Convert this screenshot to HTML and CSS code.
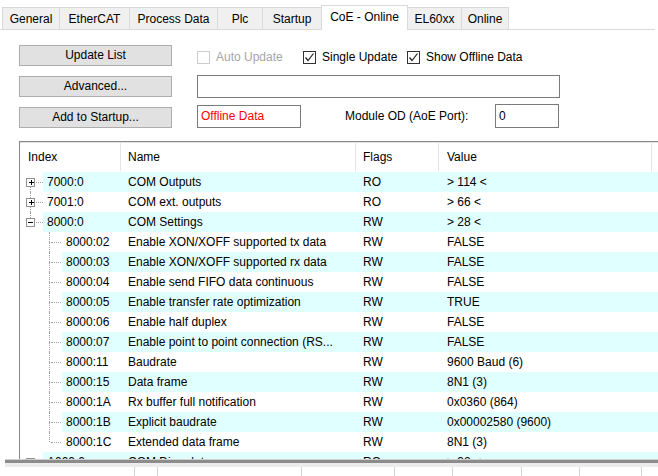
FILE: index.html
```html
<!DOCTYPE html>
<html>
<head>
<meta charset="utf-8">
<link rel="stylesheet" href="styles.css">
</head>
<body>
<div class="tabs">
  <div class="tab w-general">General</div>
  <div class="tab w-ethercat">EtherCAT</div>
  <div class="tab w-process">Process Data</div>
  <div class="tab w-plc">Plc</div>
  <div class="tab w-startup">Startup</div>
  <div class="tab sel w-coe">CoE - Online</div>
  <div class="tab w-el">EL60xx</div>
  <div class="tab w-online">Online</div>
</div>

<div class="controls">
  <div class="crow">
    <div class="btn">Update List</div>
    <div class="chk chk-auto disabled"><span class="box"></span>Auto Update</div>
    <div class="chk chk-single"><span class="box"><svg width="11" height="11" viewBox="0 0 11 11"><polyline points="1.5,5.5 4,8.5 9.5,1.5" fill="none" stroke="#222" stroke-width="1.2"/></svg></span>Single Update</div>
    <div class="chk"><span class="box"><svg width="11" height="11" viewBox="0 0 11 11"><polyline points="1.5,5.5 4,8.5 9.5,1.5" fill="none" stroke="#222" stroke-width="1.2"/></svg></span>Show Offline Data</div>
  </div>
  <div class="crow">
    <div class="btn">Advanced...</div>
    <div class="field field-wide"></div>
  </div>
  <div class="crow crow-end">
    <div class="btn">Add to Startup...</div>
    <div class="field field-offline">Offline Data</div>
    <div class="modlabel">Module OD (AoE Port):</div>
    <div class="field field-port">0</div>
  </div>
</div>

<div class="list">
  <div class="lhead">
    <div class="hc hc-index">Index</div>
    <div class="hc hc-name">Name</div>
    <div class="hc hc-flags">Flags</div>
    <div class="hc hc-value">Value</div>
    <div class="hc hc-rest"></div>
  </div>

  <div class="row">
    <div class="ttree"><div class="node"><span class="vseg off"></span><span class="exp"><span class="h"></span><span class="v"></span></span><span class="vseg"></span></div><span class="hl"></span></div>
    <div class="cells alt"><div class="c-index">7000:0</div><div class="c-name">COM Outputs</div><div class="c-flags">RO</div><div class="c-value">&gt; 114 &lt;</div></div>
  </div>
  <div class="row">
    <div class="ttree"><div class="node"><span class="vseg"></span><span class="exp"><span class="h"></span><span class="v"></span></span><span class="vseg"></span></div><span class="hl"></span></div>
    <div class="cells"><div class="c-index">7001:0</div><div class="c-name">COM ext. outputs</div><div class="c-flags">RO</div><div class="c-value">&gt; 66 &lt;</div></div>
  </div>
  <div class="row">
    <div class="ttree"><div class="node"><span class="vseg"></span><span class="exp"><span class="h"></span></span><span class="vseg off"></span></div><span class="hl"></span></div>
    <div class="cells alt"><div class="c-index">8000:0</div><div class="c-name">COM Settings</div><div class="c-flags">RW</div><div class="c-value">&gt; 28 &lt;</div></div>
  </div>

  <div class="row">
    <div class="ctree"><div class="cv"><span class="vseg"></span><span class="vseg"></span></div><span class="ch"></span></div>
    <div class="cells"><div class="c-index child">8000:02</div><div class="c-name">Enable XON/XOFF supported tx data</div><div class="c-flags">RW</div><div class="c-value">FALSE</div></div>
  </div>
  <div class="row">
    <div class="ctree"><div class="cv"><span class="vseg"></span><span class="vseg"></span></div><span class="ch"></span></div>
    <div class="cells alt"><div class="c-index child">8000:03</div><div class="c-name">Enable XON/XOFF supported rx data</div><div class="c-flags">RW</div><div class="c-value">FALSE</div></div>
  </div>
  <div class="row">
    <div class="ctree"><div class="cv"><span class="vseg"></span><span class="vseg"></span></div><span class="ch"></span></div>
    <div class="cells"><div class="c-index child">8000:04</div><div class="c-name">Enable send FIFO data continuous</div><div class="c-flags">RW</div><div class="c-value">FALSE</div></div>
  </div>
  <div class="row">
    <div class="ctree"><div class="cv"><span class="vseg"></span><span class="vseg"></span></div><span class="ch"></span></div>
    <div class="cells alt"><div class="c-index child">8000:05</div><div class="c-name">Enable transfer rate optimization</div><div class="c-flags">RW</div><div class="c-value">TRUE</div></div>
  </div>
  <div class="row">
    <div class="ctree"><div class="cv"><span class="vseg"></span><span class="vseg"></span></div><span class="ch"></span></div>
    <div class="cells"><div class="c-index child">8000:06</div><div class="c-name">Enable half duplex</div><div class="c-flags">RW</div><div class="c-value">FALSE</div></div>
  </div>
  <div class="row">
    <div class="ctree"><div class="cv"><span class="vseg"></span><span class="vseg"></span></div><span class="ch"></span></div>
    <div class="cells alt"><div class="c-index child">8000:07</div><div class="c-name">Enable point to point connection (RS...</div><div class="c-flags">RW</div><div class="c-value">FALSE</div></div>
  </div>
  <div class="row">
    <div class="ctree"><div class="cv"><span class="vseg"></span><span class="vseg"></span></div><span class="ch"></span></div>
    <div class="cells"><div class="c-index child">8000:11</div><div class="c-name">Baudrate</div><div class="c-flags">RW</div><div class="c-value">9600 Baud (6)</div></div>
  </div>
  <div class="row">
    <div class="ctree"><div class="cv"><span class="vseg"></span><span class="vseg"></span></div><span class="ch"></span></div>
    <div class="cells alt"><div class="c-index child">8000:15</div><div class="c-name">Data frame</div><div class="c-flags">RW</div><div class="c-value">8N1 (3)</div></div>
  </div>
  <div class="row">
    <div class="ctree"><div class="cv"><span class="vseg"></span><span class="vseg"></span></div><span class="ch"></span></div>
    <div class="cells"><div class="c-index child">8000:1A</div><div class="c-name">Rx buffer full notification</div><div class="c-flags">RW</div><div class="c-value">0x0360 (864)</div></div>
  </div>
  <div class="row">
    <div class="ctree"><div class="cv"><span class="vseg"></span><span class="vseg"></span></div><span class="ch"></span></div>
    <div class="cells alt"><div class="c-index child">8000:1B</div><div class="c-name">Explicit baudrate</div><div class="c-flags">RW</div><div class="c-value">0x00002580 (9600)</div></div>
  </div>
  <div class="row">
    <div class="ctree"><div class="cv"><span class="vseg"></span><span class="vseg off"></span></div><span class="ch"></span></div>
    <div class="cells"><div class="c-index child">8000:1C</div><div class="c-name">Extended data frame</div><div class="c-flags">RW</div><div class="c-value">8N1 (3)</div></div>
  </div>
  <div class="row">
    <div class="ttree"><div class="node"><span class="vseg off"></span><span class="exp"><span class="h"></span><span class="v"></span></span><span class="vseg off"></span></div><span class="hl"></span></div>
    <div class="cells alt"><div class="c-index">A000:0</div><div class="c-name">COM Diag data</div><div class="c-flags">RO</div><div class="c-value">&gt; 32 &lt;</div></div>
  </div>
</div>

<div class="splitter"></div>
<div class="bhead">
  <div class="bc b1"></div><div class="bc b2"></div><div class="bc b3"></div><div class="bc b4"></div>
  <div class="bc b5"></div><div class="bc b6"></div><div class="bc b7"></div><div class="bc b8"></div>
</div>
</body>
</html>
```

FILE: styles.css
```css
html, body {
  margin: 0;
  padding: 0;
  background: #ffffff;
  overflow: hidden;
}
body {
  width: 658px;
  height: 476px;
  font-family: "Liberation Sans", Arial, sans-serif;
  font-size: 12px;
  color: #000;
}

/* Tabs */
.tabs {
  display: flex;
  align-items: flex-end;
  height: 24px;
  margin: 5px 3px 0 0;
  padding-left: 2px;
  border-bottom: 1px solid #d9d9d9;
}
.tab {
  box-sizing: border-box;
  height: 22px;
  line-height: 22px;
  text-align: center;
  background: #f0f0f0;
  border-top: 1px solid #d9d9d9;
  border-right: 1px solid #d9d9d9;
  color: #000;
}
.tab:first-child { border-left: 1px solid #d9d9d9; }
.tab.sel {
  height: 25px;
  line-height: 22px;
  margin-bottom: -1px;
  background: #ffffff;
  border-left: 1px solid #d9d9d9;
  margin-left: -1px;
}
.w-general { width: 58px; }
.w-ethercat { width: 70px; }
.w-process { width: 88px; }
.w-plc { width: 45px; }
.w-startup { width: 59px; }
.w-coe { width: 87px; }
.w-el { width: 54px; }
.w-online { width: 47px; }

/* Controls */
.controls {
  padding: 15px 0 0 19px;
}
.crow {
  display: flex;
  align-items: center;
  height: 21px;
  margin-bottom: 10px;
}
.crow-end { align-items: flex-end; }
.btn {
  box-sizing: border-box;
  width: 153px;
  height: 21px;
  line-height: 19px;
  text-align: center;
  background: #e1e1e1;
  border: 1px solid #adadad;
  margin-right: 25px;
  flex: none;
}
.chk {
  display: flex;
  align-items: center;
  height: 21px;
  padding-top: 3px;
  flex: none;
}
.chk .box {
  box-sizing: border-box;
  width: 13px;
  height: 13px;
  border: 1px solid #333;
  background: #fff;
  margin-right: 6px;
  display: flex;
  align-items: center;
  justify-content: center;
}
.chk-auto { width: 106px; }
.chk-single { width: 104px; }
.chk.disabled { color: #a6a6a6; }
.chk.disabled .box { border-color: #cccccc; }

.field {
  box-sizing: border-box;
  height: 23px;
  border: 1px solid #7a7a7a;
  background: #fff;
  flex: none;
  line-height: 21px;
  padding-left: 3px;
}
.field-wide { width: 363px; }
.field-offline { width: 104px; color: #ff0000; }
.field-port { width: 64px; height: 24px; line-height: 22px; }
.modlabel {
  margin-left: 44px;
  width: 150px;
  height: 23px;
  line-height: 23px;
}

/* List */
.list {
  margin: 13px 0 0 19px;
  height: 318px;
  overflow: hidden;
  box-sizing: border-box;
  border-top: 1px solid #8a8a8a;
  border-left: 1px solid #828790;
}
.lhead {
  display: flex;
  height: 30px;
  border-top: 1px solid #e3e3e3;
  box-sizing: border-box;
}
.hc {
  box-sizing: border-box;
  height: 28px;
  line-height: 29px;
  border-right: 1px solid #e5e5e5;
  flex: none;
}
.hc-index { width: 101px; padding-left: 8px; }
.hc-name { width: 235px; padding-left: 7px; }
.hc-flags { width: 83px; padding-left: 7px; }
.hc-value { width: 213px; padding-left: 8px; }
.hc-rest { flex: 1; border-right: none; }

.row {
  display: flex;
  height: 20px;
}
.cells {
  flex: 1;
  display: flex;
  align-items: center;
  line-height: 20px;
  white-space: nowrap;
}
.cells.alt { background: #e0ffff; }
.c-index { box-sizing: border-box; width: 78px; padding-left: 4px; flex: none; }
.c-index.child { width: 59px; }
.c-name { box-sizing: border-box; width: 235px; padding-left: 7px; flex: none; overflow: hidden; }
.c-flags { box-sizing: border-box; width: 83px; padding-left: 7px; flex: none; }
.c-value { box-sizing: border-box; padding-left: 8px; flex: 1; }

/* tree lines */
.ttree {
  box-sizing: border-box;
  width: 23px;
  padding-left: 6px;
  display: flex;
  flex: none;
}
.node {
  width: 9px;
  display: flex;
  flex-direction: column;
  align-items: center;
}
.vseg {
  flex: 1;
  width: 0;
  border-left: 1px dotted #a0a0a0;
}
.vseg.off { border-left-color: transparent; }
.exp {
  box-sizing: border-box;
  width: 9px;
  height: 9px;
  border: 1px solid #919191;
  background: #fff;
  display: flex;
  align-items: center;
  justify-content: center;
  flex: none;
}
.exp .h {
  width: 5px;
  height: 1px;
  background: #000;
}
.exp .v {
  width: 1px;
  height: 5px;
  background: #000;
  margin-left: -3px;
}
.hl {
  align-self: center;
  width: 7px;
  height: 0;
  margin-left: 1px;
  border-top: 1px dotted #a0a0a0;
}
.ctree {
  box-sizing: border-box;
  width: 42px;
  padding-left: 29px;
  display: flex;
  flex: none;
}
.cv {
  width: 1px;
  display: flex;
  flex-direction: column;
}
.ch {
  align-self: center;
  width: 10px;
  height: 0;
  margin-left: 1px;
  border-top: 1px dotted #a0a0a0;
}

/* bottom splitter + next header */
.splitter {
  margin-left: 5px;
  height: 3px;
  border-top: 1px solid #d0d0d0;
  background: #8c8c8c;
}
.bhead {
  margin-left: 5px;
  display: flex;
  height: 13px;
  border-top: 4px solid #ececec;
}
.bc {
  box-sizing: border-box;
  height: 100%;
  border-right: 1px solid #d5d5d5;
  flex: none;
}
.b1 { width: 130px; }
.b2 { width: 23px; }
.b3 { width: 144px; }
.b4 { width: 93px; }
.b5 { width: 58px; }
.b6 { width: 69px; }
.b7 { width: 58px; }
.b8 { width: 62px; }
```
